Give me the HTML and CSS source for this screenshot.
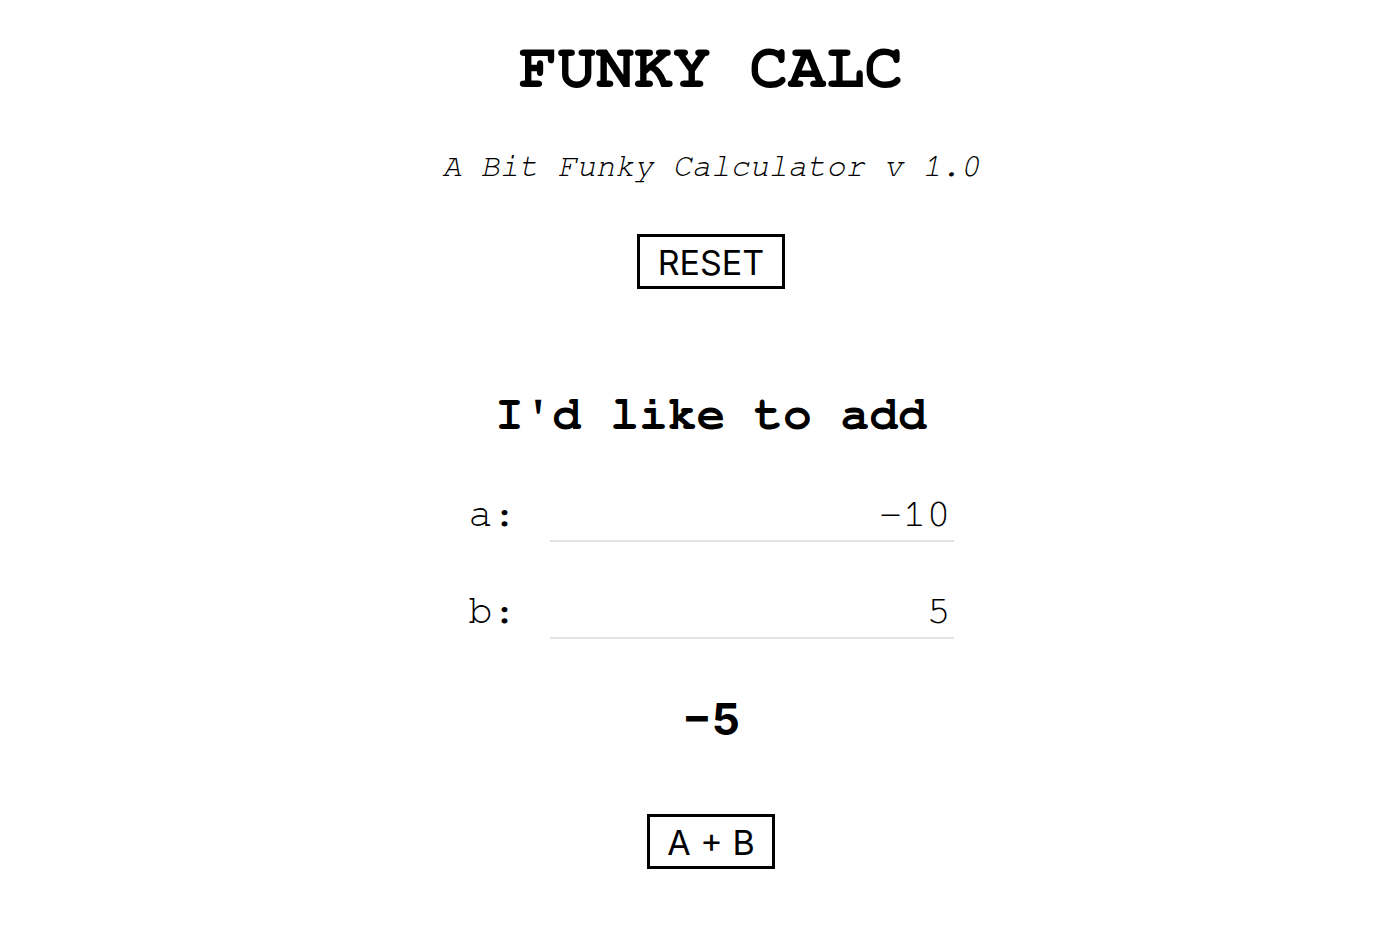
FILE: index.html
```html
<!DOCTYPE html>
<html>
<head>
<meta charset="utf-8">
<title>Funky Calc</title>
<link rel="stylesheet" href="styles.css">
</head>
<body>
<main class="app">
  <h1 class="title">FUNKY CALC</h1>
  <p class="subtitle">A Bit Funky Calculator v 1.0</p>
  <button class="btn btn-reset">RESET</button>
  <h2 class="heading">I'd like to add</h2>
  <div class="row row-a">
    <label class="label" for="a">a:</label>
    <input class="field" id="a" type="text" value="-10">
  </div>
  <div class="row row-b">
    <label class="label" for="b">b:</label>
    <input class="field" id="b" type="text" value="5">
  </div>
  <div class="result">−5</div>
  <button class="btn btn-add">A + B</button>
</main>
</body>
</html>
```

FILE: styles.css
```css
html, body {
  margin: 0;
  padding: 0;
  background: #ffffff;
  color: #000000;
}

.app {
  box-sizing: border-box;
  width: 100%;
  padding-left: 46px;
  display: flex;
  flex-direction: column;
  align-items: center;
  font-family: FreeMono, "Liberation Mono", monospace;
}

.title {
  margin: 32px 0 0;
  font-size: 64px;
  line-height: 72px;
  font-weight: bold;
}

.subtitle {
  margin: 44px 0 0;
  font-size: 32px;
  line-height: 36px;
  font-style: italic;
}

.btn {
  display: block;
  box-sizing: border-box;
  height: 55px;
  margin: 0;
  background: #ffffff;
  border: 3px solid #000000;
  border-radius: 0;
  color: #000000;
  font-family: Inter, "Liberation Sans", sans-serif;
  font-size: 34px;
  line-height: 41px;
  padding: 5px 18px 3px;
  cursor: pointer;
}

.btn-reset {
  margin-top: 50px;
}

.heading {
  margin: 99px 0 0;
  font-size: 48px;
  line-height: 54px;
  font-weight: bold;
}

.row {
  display: flex;
  align-items: flex-start;
  margin-top: 50px;
}

.row-b {
  margin-top: 47px;
}

.label {
  width: 48px;
  margin: -1px 33px 0 0;
  font-size: 40px;
  line-height: 46px;
}

.field {
  box-sizing: border-box;
  width: 404px;
  height: 50px;
  margin: 0;
  padding: 0 3px 4px 0;
  border: none;
  border-bottom: 2px solid #e2e2e2;
  outline: none;
  background: transparent;
  text-align: right;
  font-family: FreeMono, "Liberation Mono", monospace;
  font-size: 40px;
  color: #000000;
}

.result {
  margin-top: 53px;
  font-family: Inter, "Liberation Sans", sans-serif;
  font-weight: bold;
  font-size: 44px;
  line-height: 54px;
}

.btn-add {
  margin-top: 68px;
  padding-left: 17px;
  padding-right: 17px;
}
```
